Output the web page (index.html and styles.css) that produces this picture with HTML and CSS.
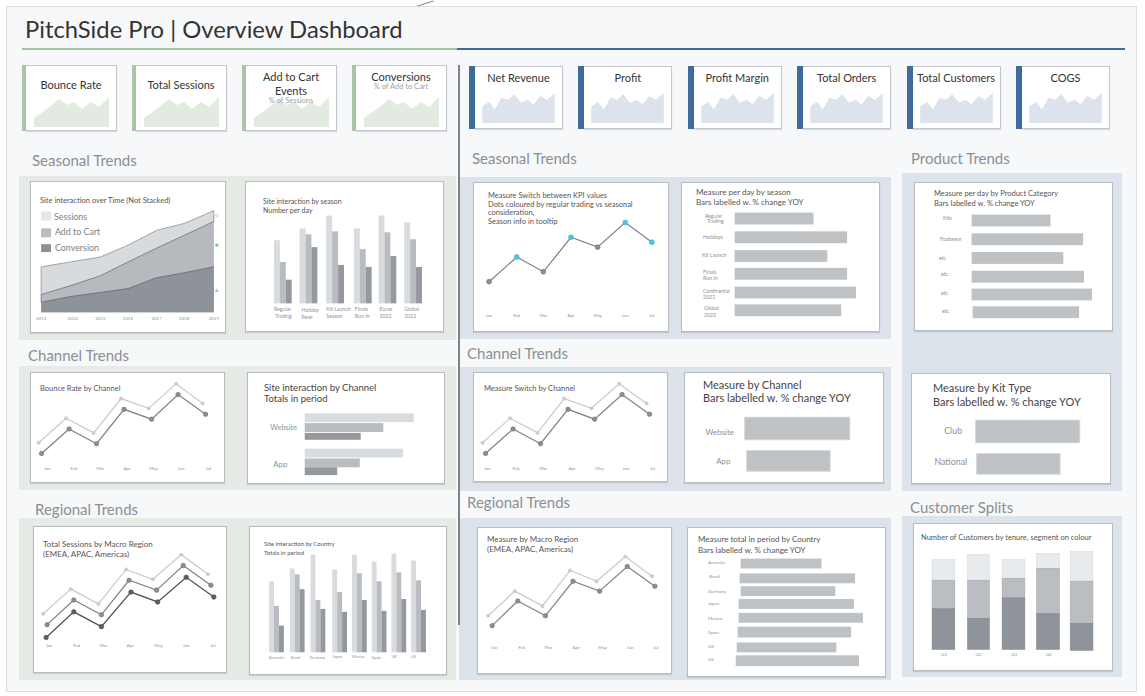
FILE: index.html
```html
<!DOCTYPE html>
<html lang="en">
<head>
<meta charset="utf-8">
<title>PitchSide Pro | Overview Dashboard</title>
<link rel="stylesheet" href="styles.css">
</head>
<body>
<div class="dash">
  <h1 class="title">PitchSide Pro | Overview Dashboard</h1>
  <div class="rule"><span class="g"></span><span class="b"></span></div>

  <div class="kpis">
    <div class="kgroup green">
      <div class="kcard"><span class="kbar"></span><div class="kbody"><div class="ktitle kt-a">Bounce Rate</div><svg class="spark" viewBox="0 0 75 30"><polygon points="0,21 13,12 25,2 33,8 40,5 48,12 57,5 65,10 75,0 75,30 0,30"/></svg></div></div>
      <div class="kcard"><span class="kbar"></span><div class="kbody"><div class="ktitle kt-a">Total Sessions</div><svg class="spark" viewBox="0 0 75 30"><polygon points="0,21 13,12 25,2 33,8 40,5 48,12 57,5 65,10 75,0 75,30 0,30"/></svg></div></div>
      <div class="kcard"><span class="kbar"></span><div class="kbody"><div class="ktitle kt-b">Add to Cart<br>Events<span class="ksub">% of Sessions</span></div><svg class="spark" viewBox="0 0 75 30"><polygon points="0,21 13,12 25,2 33,8 40,5 48,12 57,5 65,10 75,0 75,30 0,30"/></svg></div></div>
      <div class="kcard"><span class="kbar"></span><div class="kbody"><div class="ktitle kt-c">Conversions<span class="ksub up">% of Add to Cart</span></div><svg class="spark" viewBox="0 0 75 30"><polygon points="0,21 13,12 25,2 33,8 40,5 48,12 57,5 65,10 75,0 75,30 0,30"/></svg></div></div>
    </div>
    <div class="kgroup blue">
      <div class="kcard"><span class="kbar"></span><div class="kbody"><div class="ktitle kt-d">Net Revenue</div><svg class="spark" viewBox="0 0 75 31"><polygon points="0,14 7,9 13,17 20,5 27,7 33,1 40,10 47,7 53,12 60,3 67,7 75,0 75,31 0,31"/></svg></div></div>
      <div class="kcard"><span class="kbar"></span><div class="kbody"><div class="ktitle kt-d">Profit</div><svg class="spark" viewBox="0 0 75 31"><polygon points="0,14 7,9 13,17 20,5 27,7 33,1 40,10 47,7 53,12 60,3 67,7 75,0 75,31 0,31"/></svg></div></div>
      <div class="kcard"><span class="kbar"></span><div class="kbody"><div class="ktitle kt-d">Profit Margin</div><svg class="spark" viewBox="0 0 75 31"><polygon points="0,14 7,9 13,17 20,5 27,7 33,1 40,10 47,7 53,12 60,3 67,7 75,0 75,31 0,31"/></svg></div></div>
      <div class="kcard"><span class="kbar"></span><div class="kbody"><div class="ktitle kt-d">Total Orders</div><svg class="spark" viewBox="0 0 75 31"><polygon points="0,14 7,9 13,17 20,5 27,7 33,1 40,10 47,7 53,12 60,3 67,7 75,0 75,31 0,31"/></svg></div></div>
      <div class="kcard"><span class="kbar"></span><div class="kbody"><div class="ktitle kt-d">Total Customers</div><svg class="spark" viewBox="0 0 75 31"><polygon points="0,14 7,9 13,17 20,5 27,7 33,1 40,10 47,7 53,12 60,3 67,7 75,0 75,31 0,31"/></svg></div></div>
      <div class="kcard"><span class="kbar"></span><div class="kbody"><div class="ktitle kt-d">COGS</div><svg class="spark" viewBox="0 0 75 31"><polygon points="0,14 7,9 13,17 20,5 27,7 33,1 40,10 47,7 53,12 60,3 67,7 75,0 75,31 0,31"/></svg></div></div>
    </div>
  </div>

  <div class="main">
    <!-- LEFT COLUMN -->
    <section class="col col-l">
      <h2 class="sh l-s">Seasonal Trends</h2>
      <div class="panel pg pl-s">
        <div class="card c-l1">
          <div class="ct t-l1">Site interaction over Time (Not Stacked)</div>
          <svg viewBox="0 0 196 152">
            <polygon class="a1" points="10,86 40,81 70,76 98,64 127,49 155,42 185,29 185,132 10,132"/>
            <polygon class="a2" points="10,114 40,105 70,95 98,81 127,67 155,54 185,40 185,132 10,132"/>
            <polygon class="a3" points="10,122 40,116 70,112 98,108 127,97 155,92 185,86 185,132 10,132"/>
            <polyline class="e1" points="10,114 10,86 40,81 70,76 98,64 127,49 155,42 185,29 185,40"/>
            <polyline class="e2" points="10,122 10,114 40,105 70,95 98,81 127,67 155,54 185,40"/>
            <polyline class="e3" points="10,122 40,116 70,112 98,108 127,97 155,92 185,86"/>
            <rect x="10" y="30" width="10" height="9" class="lg1"/>
            <text x="23" y="38" class="lgt">Sessions</text>
            <rect x="10" y="47" width="10" height="9" class="lg2"/>
            <text x="24" y="54" class="lgt">Add to Cart</text>
            <rect x="10" y="63" width="10" height="8" class="lg3"/>
            <text x="24" y="70" class="lgt">Conversion</text>
            <circle cx="188" cy="34" r="1.3" class="mk1"/>
            <rect x="186.5" y="62.5" width="3" height="3" class="mk2"/>
            <polygon points="188,108 190,111.5 186,111.5" class="mk3"/>
            <g class="ax">
              <text x="10" y="140">2013</text><text x="42" y="140">2014</text><text x="70" y="140">2015</text><text x="98" y="140">2016</text><text x="127" y="140">2017</text><text x="155" y="140">2018</text><text x="185" y="140">2019</text>
            </g>
          </svg>
        </div>
        <div class="card c-l2">
          <div class="ct t-l2">Site interaction by season<br>Number per day</div>
          <svg viewBox="0 0 199 151">
            <g class="b1">
              <rect x="28" y="59" width="6" height="64"/><rect x="54" y="47" width="6" height="76"/><rect x="81" y="34" width="6" height="89"/><rect x="109" y="47" width="6" height="76"/><rect x="134" y="34" width="6" height="89"/><rect x="160" y="41" width="6" height="82"/>
            </g>
            <g class="b2">
              <rect x="34" y="81" width="6" height="42"/><rect x="60" y="53" width="6" height="70"/><rect x="87" y="50" width="6" height="73"/><rect x="115" y="68" width="6" height="55"/><rect x="140" y="51" width="6" height="72"/><rect x="166" y="58" width="6" height="65"/>
            </g>
            <g class="b3">
              <rect x="40" y="99" width="6" height="24"/><rect x="66" y="66" width="6" height="57"/><rect x="93" y="84" width="6" height="39"/><rect x="121" y="86" width="6" height="37"/><rect x="146" y="75" width="6" height="48"/><rect x="172" y="86" width="6" height="37"/>
            </g>
            <g class="lb lb5">
              <text x="28" y="131">Regular</text><text x="29" y="138">Trading</text>
              <text x="56" y="132">Holiday</text><text x="56" y="139">Peak</text>
              <text x="81" y="131">Kit Launch</text><text x="81" y="138">Season</text>
              <text x="110" y="131">Finals</text><text x="110" y="138">Run In</text>
              <text x="135" y="131">Euros</text><text x="135" y="138">2022</text>
              <text x="160" y="131">Global</text><text x="160" y="138">2022</text>
            </g>
          </svg>
        </div>
      </div>

      <h2 class="sh l-c">Channel Trends</h2>
      <div class="panel pg pl-c">
        <div class="card c-cl1">
          <div class="ct t-cl1">Bounce Rate by Channel</div>
          <svg viewBox="0 0 195 111">
            <polyline class="ln1" points="7,71 35,46 63,61 91,26 119,36 147,11 174,31"/>
            <g class="d1"><circle cx="7" cy="71" r="2"/><circle cx="35" cy="46" r="2"/><circle cx="63" cy="61" r="2"/><circle cx="91" cy="26" r="2"/><circle cx="119" cy="36" r="2"/><circle cx="147" cy="11" r="2"/><circle cx="174" cy="31" r="2"/></g>
            <polyline class="ln2" points="10,82 38,57 66,72 94,37 122,47 149,22 177,42"/>
            <g class="d2"><circle cx="10" cy="82" r="2.3"/><circle cx="38" cy="57" r="2.3"/><circle cx="66" cy="72" r="2.3"/><circle cx="94" cy="37" r="2.3"/><circle cx="122" cy="47" r="2.3"/><circle cx="149" cy="22" r="2.3"/><circle cx="177" cy="42" r="2.3"/></g>
            <g class="ax"><text x="16" y="99">Jan</text><text x="43" y="99">Feb</text><text x="70" y="99">Mar</text><text x="97" y="99">Apr</text><text x="124" y="99">May</text><text x="152" y="99">Jun</text><text x="180" y="99">Jul</text></g>
          </svg>
        </div>
        <div class="card c-cl2">
          <div class="ct t-cl2">Site interaction by Channel<br>Totals in period</div>
          <svg viewBox="0 0 198 112">
            <rect x="57" y="41" width="111" height="9" class="f1"/>
            <rect x="57" y="51" width="80" height="9" class="f2"/>
            <rect x="57" y="61" width="57" height="7" class="f3"/>
            <rect x="57" y="77" width="100" height="9" class="f1"/>
            <rect x="57" y="87" width="56" height="9" class="f2"/>
            <rect x="57" y="96" width="33" height="8" class="f3"/>
            <text x="22" y="58" class="lb lb7">Website</text>
            <text x="25" y="96" class="lb lb8">App</text>
          </svg>
        </div>
      </div>

      <h2 class="sh l-r">Regional Trends</h2>
      <div class="panel pg pl-r">
        <div class="card c-rl1">
          <div class="ct t-rl1">Total Sessions by Macro Region<br>(EMEA, APAC, Americas)</div>
          <svg viewBox="0 0 194 147">
            <polyline class="ln1" points="9,88 37,63 65,78 93,43 120,53 149,28 176,48"/>
            <g class="d1"><circle cx="9" cy="88" r="2"/><circle cx="37" cy="63" r="2"/><circle cx="65" cy="78" r="2"/><circle cx="93" cy="43" r="2"/><circle cx="120" cy="53" r="2"/><circle cx="149" cy="28" r="2"/><circle cx="176" cy="48" r="2"/></g>
            <polyline class="ln2" points="13,99 40,74 68,89 96,54 124,64 151,39 179,59"/>
            <g class="d2"><circle cx="13" cy="99" r="2.3"/><circle cx="40" cy="74" r="2.3"/><circle cx="68" cy="89" r="2.3"/><circle cx="96" cy="54" r="2.3"/><circle cx="124" cy="64" r="2.3"/><circle cx="151" cy="39" r="2.3"/><circle cx="179" cy="59" r="2.3"/></g>
            <polyline class="ln3" points="12,112 40,86 68,101 98,66 125,76 154,51 182,71"/>
            <g class="d3"><circle cx="12" cy="112" r="2.3"/><circle cx="40" cy="86" r="2.3"/><circle cx="68" cy="101" r="2.3"/><circle cx="98" cy="66" r="2.3"/><circle cx="125" cy="76" r="2.3"/><circle cx="154" cy="51" r="2.3"/><circle cx="182" cy="71" r="2.3"/></g>
            <g class="ax"><text x="15" y="122">Jan</text><text x="43" y="122">Feb</text><text x="70" y="122">Mar</text><text x="97" y="122">Apr</text><text x="126" y="122">May</text><text x="154" y="122">Jun</text><text x="181" y="122">Jul</text></g>
          </svg>
        </div>
        <div class="card c-rl2">
          <div class="ct t-rl2">Site interaction by Country<br>Totals in period</div>
          <svg viewBox="0 0 198 149">
            <g class="b1">
              <rect x="19" y="55" width="5" height="72"/><rect x="40" y="42" width="5" height="85"/><rect x="61" y="28" width="5" height="99"/><rect x="83" y="43" width="5" height="84"/><rect x="103" y="28" width="5" height="99"/><rect x="123" y="35" width="5" height="92"/><rect x="143" y="27" width="5" height="100"/><rect x="163" y="34" width="5" height="93"/>
            </g>
            <g class="b2">
              <rect x="24" y="80" width="5" height="47"/><rect x="45" y="48" width="5" height="79"/><rect x="66" y="74" width="5" height="53"/><rect x="88" y="66" width="5" height="61"/><rect x="108" y="47" width="5" height="80"/><rect x="128" y="55" width="5" height="72"/><rect x="148" y="46" width="5" height="81"/><rect x="168" y="54" width="5" height="73"/>
            </g>
            <g class="b3">
              <rect x="29" y="100" width="5" height="27"/><rect x="50" y="63" width="5" height="64"/><rect x="71" y="83" width="5" height="44"/><rect x="93" y="86" width="5" height="41"/><rect x="113" y="74" width="5" height="53"/><rect x="133" y="85" width="5" height="42"/><rect x="153" y="73" width="5" height="54"/><rect x="173" y="84" width="5" height="43"/>
            </g>
            <g class="lb lb4">
              <text x="19" y="134">Australia</text><text x="41" y="134">Brazil</text><text x="60" y="134">Germany</text><text x="83" y="133">Japan</text><text x="103" y="133">Mexico</text><text x="123" y="134">Spain</text><text x="143" y="133">UK</text><text x="163" y="133">US</text>
            </g>
          </svg>
        </div>
      </div>
    </section>

    <!-- MIDDLE COLUMN -->
    <section class="col col-m">
      <h2 class="sh m-s">Seasonal Trends</h2>
      <div class="panel pb pm-s">
        <div class="card c-m1">
          <div class="ct t-m1">Measure Switch between KPI values<br>Dots coloured by regular trading vs seasonal<br>consideration,<br>Season info in tooltip</div>
          <svg viewBox="0 0 196 150">
            <polyline class="ln2" points="15,100 43,75 70,90 98,55 125,65 153,40 180,60"/>
            <circle cx="15" cy="100" r="2.5" class="dg"/>
            <circle cx="43" cy="75" r="2.5" class="db"/>
            <circle cx="70" cy="90" r="2.5" class="dg"/>
            <circle cx="98" cy="55" r="2.5" class="db"/>
            <circle cx="125" cy="65" r="2.5" class="dg"/>
            <circle cx="153" cy="40" r="2.5" class="db"/>
            <circle cx="180" cy="60" r="2.5" class="db"/>
            <g class="ax"><text x="15" y="136">Jan</text><text x="43" y="136">Feb</text><text x="70" y="136">Mar</text><text x="98" y="136">Apr</text><text x="125" y="136">May</text><text x="153" y="136">Jun</text><text x="180" y="136">Jul</text></g>
          </svg>
        </div>
        <div class="card c-m2">
          <div class="ct t-m2">Measure per day by season<br>Bars labelled w. % change YOY</div>
          <svg viewBox="0 0 199 150">
            <g class="hb">
              <rect x="53" y="30" width="80" height="12"/><rect x="53" y="49" width="114" height="12"/><rect x="53" y="68" width="94" height="12"/><rect x="53" y="86" width="114" height="12"/><rect x="53" y="105" width="123" height="12"/><rect x="53" y="123" width="108" height="12"/>
            </g>
            <g class="lb lb5">
              <text x="23" y="35">Regular</text><text x="25" y="41">Trading</text>
              <text x="21" y="57">Holidays</text>
              <text x="20" y="75">Kit Launch</text>
              <text x="21" y="92">Finals</text><text x="21" y="98">Run In</text>
              <text x="21" y="111">Continental</text><text x="21" y="118">2022</text>
              <text x="22" y="129">Global</text><text x="22" y="136">2022</text>
            </g>
          </svg>
        </div>
      </div>

      <h2 class="sh m-c">Channel Trends</h2>
      <div class="panel pb pm-c">
        <div class="card c-cm1">
          <div class="ct t-cm1">Measure Switch by Channel</div>
          <svg viewBox="0 0 195 110">
            <polyline class="ln1" points="8,71 36,46 64,61 91,26 119,36 147,11 175,31"/>
            <g class="d1"><circle cx="8" cy="71" r="2"/><circle cx="36" cy="46" r="2"/><circle cx="64" cy="61" r="2"/><circle cx="91" cy="26" r="2"/><circle cx="119" cy="36" r="2"/><circle cx="147" cy="11" r="2"/><circle cx="175" cy="31" r="2"/></g>
            <polyline class="ln2" points="11,82 39,57 67,72 95,37 122,47 150,22 178,42"/>
            <g class="d2"><circle cx="11" cy="82" r="2.3"/><circle cx="39" cy="57" r="2.3"/><circle cx="67" cy="72" r="2.3"/><circle cx="95" cy="37" r="2.3"/><circle cx="122" cy="47" r="2.3"/><circle cx="150" cy="22" r="2.3"/><circle cx="178" cy="42" r="2.3"/></g>
            <g class="ax"><text x="13" y="99">Jan</text><text x="42" y="99">Feb</text><text x="70" y="99">Mar</text><text x="99" y="99">Apr</text><text x="127" y="99">May</text><text x="154" y="99">Jun</text><text x="181" y="99">Jul</text></g>
          </svg>
        </div>
        <div class="card c-cm2">
          <div class="ct t-cm2">Measure by Channel<br>Bars labelled w. % change YOY</div>
          <svg viewBox="0 0 200 111">
            <rect x="60" y="45" width="107" height="23" class="hbb"/>
            <rect x="62" y="79" width="85" height="21" class="hbb"/>
            <text x="20" y="63" class="lb lb8">Website</text>
            <text x="31" y="93" class="lb lb8">App</text>
          </svg>
        </div>
      </div>

      <h2 class="sh m-r">Regional Trends</h2>
      <div class="panel pb pm-r">
        <div class="card c-rm1">
          <div class="ct t-rm1">Measure by Macro Region<br>(EMEA, APAC, Americas)</div>
          <svg viewBox="0 0 195 147">
            <polyline class="ln1" points="10,89 37,64 65,79 93,43 120,54 149,29 176,49"/>
            <g class="d1"><circle cx="10" cy="89" r="2"/><circle cx="37" cy="64" r="2"/><circle cx="65" cy="79" r="2"/><circle cx="93" cy="43" r="2"/><circle cx="120" cy="54" r="2"/><circle cx="149" cy="29" r="2"/><circle cx="176" cy="49" r="2"/></g>
            <polyline class="ln2" points="14,99 40,74 68,89 96,54 123,64 151,39 179,59"/>
            <g class="d2"><circle cx="14" cy="99" r="2.3"/><circle cx="40" cy="74" r="2.3"/><circle cx="68" cy="89" r="2.3"/><circle cx="96" cy="54" r="2.3"/><circle cx="123" cy="64" r="2.3"/><circle cx="151" cy="39" r="2.3"/><circle cx="179" cy="59" r="2.3"/></g>
            <g class="ax"><text x="16" y="123">Jan</text><text x="44" y="123">Feb</text><text x="71" y="123">Mar</text><text x="99" y="123">Apr</text><text x="126" y="123">May</text><text x="154" y="123">Jun</text><text x="180" y="123">Jul</text></g>
          </svg>
        </div>
        <div class="card c-rm2">
          <div class="ct t-rm2">Measure total in period by Country<br>Bars labelled w. % change YOY</div>
          <svg viewBox="0 0 199 150">
            <g class="hb">
              <rect x="53" y="31" width="82" height="10"/><rect x="52" y="46" width="117" height="10"/><rect x="53" y="59" width="96" height="10"/><rect x="51" y="72" width="117" height="10"/><rect x="51" y="86" width="126" height="10"/><rect x="50" y="100" width="115" height="11"/><rect x="49" y="116" width="101" height="10"/><rect x="48" y="129" width="125" height="11"/>
            </g>
            <g class="lb lb45">
              <text x="20" y="37">Australia</text><text x="21" y="51">Brazil</text><text x="20" y="66">Germany</text><text x="20" y="78">Japan</text><text x="20" y="93">Mexico</text><text x="20" y="107">Spain</text><text x="20" y="122">UK</text><text x="20" y="135">US</text>
            </g>
          </svg>
        </div>
      </div>
    </section>

    <!-- RIGHT COLUMN -->
    <section class="col col-r">
      <h2 class="sh r-p">Product Trends</h2>
      <div class="panel pb pr-p">
        <div class="card c-r1">
          <div class="ct t-r1">Measure per day by Product Category<br>Bars labelled w. % change YOY</div>
          <svg viewBox="0 0 199 149">
            <g class="hb">
              <rect x="57" y="32" width="80" height="12"/><rect x="57" y="51" width="113" height="12"/><rect x="57" y="70" width="93" height="12"/><rect x="57" y="89" width="114" height="12"/><rect x="57" y="107" width="122" height="12"/><rect x="58" y="125" width="108" height="12"/>
            </g>
            <g class="lb lb5">
              <text x="28" y="38">Kits</text><text x="25" y="59">Footwear</text><text x="24" y="78">etc</text><text x="26" y="94">etc</text><text x="26" y="114">etc</text><text x="27" y="132">etc</text>
            </g>
          </svg>
        </div>
        <div class="card c-r2">
          <div class="ct t-r2">Measure by Kit Type<br>Bars labelled w. % change YOY</div>
          <svg viewBox="0 0 200 111">
            <rect x="64" y="47" width="106" height="23" class="hbb"/>
            <rect x="65" y="81" width="85" height="21" class="hbb"/>
            <text x="32" y="61" class="lb lb9">Club</text>
            <text x="22" y="93" class="lb lb9">National</text>
          </svg>
        </div>
      </div>

      <h2 class="sh r-c">Customer Splits</h2>
      <div class="panel pb pr-c">
        <div class="card c-rc">
          <div class="ct t-rc">Number of Customers by tenure, segment on colour</div>
          <svg viewBox="0 0 200 148">
            <g class="s1">
              <rect x="18" y="36" width="23" height="21"/><rect x="54" y="31" width="22" height="26"/><rect x="89" y="36" width="23" height="19"/><rect x="124" y="30" width="23" height="15"/><rect x="158" y="28" width="23" height="30"/>
            </g>
            <g class="s2">
              <rect x="18" y="57" width="23" height="29"/><rect x="54" y="57" width="22" height="39"/><rect x="89" y="55" width="23" height="20"/><rect x="124" y="45" width="23" height="46"/><rect x="158" y="58" width="23" height="43"/>
            </g>
            <g class="s3">
              <rect x="18" y="86" width="23" height="41"/><rect x="54" y="96" width="22" height="31"/><rect x="89" y="75" width="23" height="52"/><rect x="124" y="91" width="23" height="36"/><rect x="158" y="101" width="23" height="27"/>
            </g>
            <g class="ax"><text x="30" y="134">Q1</text><text x="65" y="134">Q2</text><text x="101" y="134">Q3</text><text x="136" y="134">Q4</text></g>
          </svg>
        </div>
      </div>
    </section>
  </div>
</div>
</body>
</html>
```

FILE: styles.css
```css
* { box-sizing: border-box; }
body {
  margin: 0;
  background: #ffffff;
  font-family: Lato, "Open Sans", "Noto Sans", sans-serif;
  color: #333;
}
.dash {
  position: relative;
  margin: 6px;
  width: 1131px;
  height: 686px;
  border: 1px solid #dcdde0;
  background: #f7f8fa;
}
/* little pen stroke above the frame */
.dash::before {
  content: "";
  position: absolute;
  left: 410px;
  top: -4px;
  width: 17px;
  height: 1px;
  background: #8a8a8a;
  transform: rotate(-17deg);
}
/* column divider between web and commercial halves */
.dash::after {
  content: "";
  position: absolute;
  left: 451px;
  top: 58px;
  width: 1.5px;
  height: 560px;
  background: #7f8286;
}
.title {
  margin: 8px 0 0 18px;
  font-size: 23.8px;
  line-height: 28px;
  font-weight: 400;
  color: #333;
}
.rule { display: flex; margin: 5px 0 0 15px; height: 2px; }
.rule .g { width: 435px; background: #a5c3a1; }
.rule .b { width: 668px; background: #3e6b9b; }

/* KPI cards */
.kpis { display: flex; align-items: flex-start; margin: 15px 0 0 15px; }
.kgroup { display: flex; align-items: flex-start; }
.kgroup.green { gap: 15px; }
.kgroup.blue { gap: 15.4px; margin-left: 22px; margin-top: 1px; }
.kcard { display: flex; }
.green .kcard { width: 95px; height: 66px; }
.blue .kcard { width: 94px; height: 63px; }
.kbar { display: block; }
.green .kbar { width: 4px; background: #a9c6a5; }
.blue .kbar { width: 6px; background: #3e6b9b; }
.kbody {
  flex: 1;
  display: grid;
  background: #fff;
  border: 1px solid #c3c6ca;
  border-left: none;
  box-shadow: 0 1px 1px rgba(0, 0, 0, 0.12);
}
.kbody > * { grid-area: 1 / 1; }
.ktitle {
  align-self: start;
  text-align: center;
  font-size: 11px;
  line-height: 13px;
  color: #333;
  position: relative;
  z-index: 1;
}
.kt-a { padding-top: 12px; }
.kt-b { padding-top: 4px; line-height: 13.5px; }
.kt-c { padding-top: 5px; line-height: 12px; }
.kt-d { padding-top: 4px; }
.ksub { display: block; font-size: 7.5px; line-height: 8px; color: #9ea2a6; }
.ksub.up { margin-top: 0; }
.spark { align-self: end; justify-self: center; width: 75px; height: 30px; }
.green .spark { margin-bottom: 3px; }
.blue .spark { margin-bottom: 5px; }
.green .spark polygon { fill: #e3eae1; }
.blue .spark polygon { fill: #dce3ec; }

/* main grid */
.main { display: flex; margin: 14px 0 0 12px; }
.col { display: flex; flex-direction: column; }
.col-l { width: 437px; }
.col-m { width: 432px; margin-left: 3px; }
.col-r { width: 220px; margin-left: 11px; }

.sh { margin: 0; font-size: 15px; line-height: 18px; font-weight: 400; color: #8a8f94; }
.l-s { height: 31px; padding: 6px 0 0 13px; }
.l-c { height: 26px; padding: 6px 0 0 9px; }
.l-r { height: 28px; padding: 10px 0 0 16px; }
.m-s { height: 32px; padding: 4px 0 0 13px; }
.m-c { height: 28px; padding: 5px 0 0 8px; }
.m-r { height: 27px; padding: 2px 0 0 8px; }
.r-p { height: 28px; padding: 4px 0 0 9px; }
.r-c { height: 25px; padding: 7px 0 0 8px; }

.panel { display: flex; align-items: flex-start; }
.pg { background: #e6ebe6; }
.pb { background: #dde3ea; }
.pl-s { height: 164px; padding: 5px 0 0 11px; gap: 19px; }
.pl-c { height: 124px; padding: 6px 0 0 11px; gap: 22px; }
.pl-r { height: 162px; padding: 8px 0 0 14px; gap: 22px; }
.pm-s { height: 162px; padding: 5px 0 0 14px; gap: 12px; }
.pm-c { height: 124px; padding: 5px 0 0 14px; gap: 16px; }
.pm-r { height: 162px; padding: 9px 0 0 18px; gap: 15px; }
.pr-p { height: 318px; padding: 9px 0 0 12px; flex-direction: column; }
.pr-c { height: 161px; padding: 7px 0 0 11px; }

/* chart cards */
.card {
  display: grid;
  grid-template: 1fr / 1fr;
  background: #fff;
  border: 1px solid #b9bcc0;
  box-shadow: 0 1px 1px rgba(0, 0, 0, 0.12);
}
.card > * { grid-area: 1 / 1; }
.card svg { display: block; width: 100%; height: 100%; }
.ct { align-self: start; color: #555; position: relative; z-index: 1; }

.c-l1 { width: 196px; height: 152px; }
.c-l2 { width: 199px; height: 151px; }
.c-cl1 { width: 195px; height: 111px; }
.c-cl2 { width: 198px; height: 112px; }
.c-rl1 { width: 194px; height: 147px; }
.c-rl2 { width: 198px; height: 149px; }
.c-m1 { width: 196px; height: 150px; }
.c-m2 { width: 199px; height: 150px; }
.c-cm1 { width: 195px; height: 110px; }
.c-cm2 { width: 200px; height: 111px; }
.c-rm1 { width: 195px; height: 147px; }
.c-rm2 { width: 199px; height: 150px; }
.c-r1 { width: 199px; height: 149px; }
.c-r2 { width: 200px; height: 111px; margin: 42px 0 0 -3px; }
.c-rc { width: 200px; height: 148px; }

.t-l1 { padding: 14px 0 0 9px; font-size: 7.5px; line-height: 9px; }
.t-l2 { padding: 15px 0 0 17px; font-size: 7px; line-height: 9px; }
.t-m1 { padding: 9px 0 0 14px; font-size: 7.5px; line-height: 8.7px; }
.t-m2 { padding: 4px 0 0 14px; font-size: 8px; line-height: 10px; }
.t-r1 { padding: 6px 0 0 19px; font-size: 7.5px; line-height: 10px; }
.t-r2 { padding: 7px 0 0 21px; font-size: 11px; line-height: 14px; color: #444; }
.t-cl1 { padding: 11px 0 0 9px; font-size: 7.5px; line-height: 9px; }
.t-cl2 { padding: 9px 0 0 16px; font-size: 9.5px; line-height: 11px; color: #444; }
.t-cm1 { padding: 11px 0 0 10px; font-size: 7.5px; line-height: 9px; }
.t-cm2 { padding: 6px 0 0 18px; font-size: 11px; line-height: 12.5px; color: #444; }
.t-rl1 { padding: 12px 0 0 9px; font-size: 8px; line-height: 10px; }
.t-rl2 { padding: 12px 0 0 14px; font-size: 6px; line-height: 9px; }
.t-rm1 { padding: 6px 0 0 9px; font-size: 8px; line-height: 10px; }
.t-rm2 { padding: 6px 0 0 10px; font-size: 8px; line-height: 11px; }
.t-rc { padding: 9px 0 0 7px; font-size: 7.5px; line-height: 9px; }

/* svg chart styling */
.card svg text { font-family: Lato, "Open Sans", sans-serif; fill: #8d9195; }
.ax text { font-size: 4.5px; text-anchor: middle; }
.lb4 text { font-size: 4px; }
.lb45 text { font-size: 4.5px; }
.lb5 text { font-size: 5.3px; }
text.lb7 { font-size: 7.5px; }
text.lb8 { font-size: 8px; fill: #6f7377; }
text.lb9 { font-size: 9px; fill: #6f7377; }
.lgt { font-size: 9px; fill: #7d8185 !important; }

.a1 { fill: #d8dbde; }
.a2 { fill: #b6babe; }
.a3 { fill: #8e9399; }
.e1 { fill: none; stroke: #9ea2a6; stroke-width: 1; }
.e2 { fill: none; stroke: #7f8388; stroke-width: 1; }
.e3 { fill: none; stroke: #6f747a; stroke-width: 1; }
.lg1 { fill: #e4e6e9; }
.lg2 { fill: #b9bcbf; }
.lg3 { fill: #8d9197; }
.mk1 { fill: none; stroke: #d9a6d6; stroke-width: 0.7; }
.mk2 { fill: #5fcf9c; }
.mk3 { fill: #86cdeb; }

.b1 rect, .f1 { fill: #d8dcdf; }
.b2 rect, .f2 { fill: #b9bcc0; }
.b3 rect, .f3 { fill: #95999e; }
.hb rect { fill: #bfc2c5; }
.hbb { fill: #bfc2c5; stroke: #d4d6d8; stroke-width: 1; }

.ln1 { fill: none; stroke: #c9ccd0; stroke-width: 1.3; }
.ln2 { fill: none; stroke: #7f8489; stroke-width: 1.3; }
.ln3 { fill: none; stroke: #4f5459; stroke-width: 1.3; }
.d1 circle { fill: #c9ccd0; }
.d2 circle { fill: #8b8f94; stroke: #6e7277; stroke-width: 0.6; }
.d3 circle { fill: #5a5f64; stroke: #44484c; stroke-width: 0.6; }
.dg { fill: #8b8f94; stroke: #6e7277; stroke-width: 0.6; }
.db { fill: #4fc3e3; stroke: #3fb2d3; stroke-width: 0.6; }

.s1 rect { fill: #e8ebee; stroke: #d6d9dc; stroke-width: 0.6; }
.s2 rect { fill: #babdc1; stroke: #a6a9ad; stroke-width: 0.6; }
.s3 rect { fill: #8f949a; stroke: #7d8288; stroke-width: 0.6; }
```
